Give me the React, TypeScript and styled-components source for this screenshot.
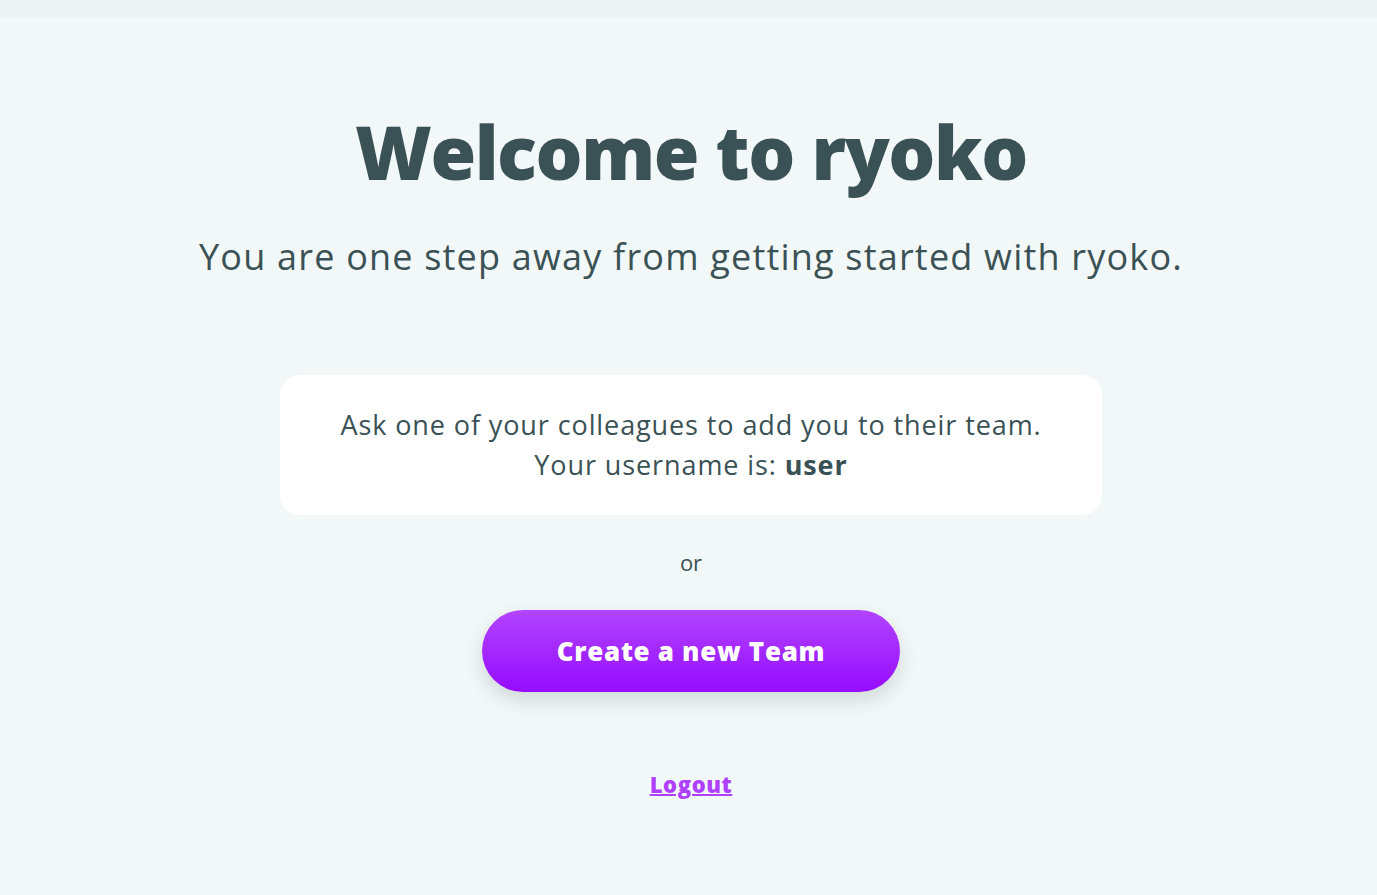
import styled, { createGlobalStyle } from 'styled-components';

const GlobalStyle = createGlobalStyle`
  html, body {
    margin: 0;
    padding: 0;
    background-color: #f2f7f7;
    font-family: "Open Sans", "Noto Sans", sans-serif;
    color: #3a5155;
  }
`;

const TopBar = styled.div`
  height: 17px;
  background-color: #ecf4f3;
`;

const Page = styled.main`
  display: flex;
  flex-direction: column;
  align-items: center;
  min-height: 878px;
  padding: 98px 0 0 5px;
  box-sizing: border-box;
`;

const Title = styled.h1`
  margin: 0;
  font-size: 74px;
  font-weight: 800;
  letter-spacing: -1.5px;
  line-height: 74px;
`;

const Subtitle = styled.p`
  margin: 46px 0 0;
  font-size: 36px;
  font-weight: 400;
  letter-spacing: 1.2px;
  line-height: 44px;
`;

const InfoCard = styled.div`
  margin-top: 96px;
  width: 822px;
  height: 140px;
  box-sizing: border-box;
  background: #ffffff;
  border-radius: 20px;
  display: flex;
  flex-direction: column;
  justify-content: center;
  align-items: center;
  font-size: 27px;
  letter-spacing: 0.9px;
  line-height: 40px;
  text-align: center;
`;

const Or = styled.p`
  margin: 32px 0 0;
  font-size: 22px;
  line-height: 30px;
`;

const CreateButton = styled.button`
  margin-top: 33px;
  width: 418px;
  height: 82px;
  border: none;
  border-radius: 41px;
  background: linear-gradient(180deg, #b244ff 0%, #960cff 100%);
  box-shadow: 0 8px 18px rgba(58, 81, 85, 0.18);
  color: #ffffff;
  font-family: "Open Sans", "Noto Sans", sans-serif;
  font-size: 26px;
  font-weight: 800;
  letter-spacing: 0.7px;
  cursor: pointer;
`;

const LogoutLink = styled.a`
  margin-top: 77px;
  font-size: 22px;
  font-weight: 800;
  letter-spacing: 0.6px;
  color: #b040ff;
  text-decoration: underline;
  text-decoration-thickness: 2px;
  cursor: pointer;
`;

function App() {
  return (
    <>
      <GlobalStyle />
      <TopBar />
      <Page>
        <Title>Welcome to ryoko</Title>
        <Subtitle>You are one step away from getting started with ryoko.</Subtitle>
        <InfoCard>
          <span>Ask one of your colleagues to add you to their team.</span>
          <span>
            Your username is: <b>user</b>
          </span>
        </InfoCard>
        <Or>or</Or>
        <CreateButton>Create a new Team</CreateButton>
        <LogoutLink>Logout</LogoutLink>
      </Page>
    </>
  );
}

export default App;
